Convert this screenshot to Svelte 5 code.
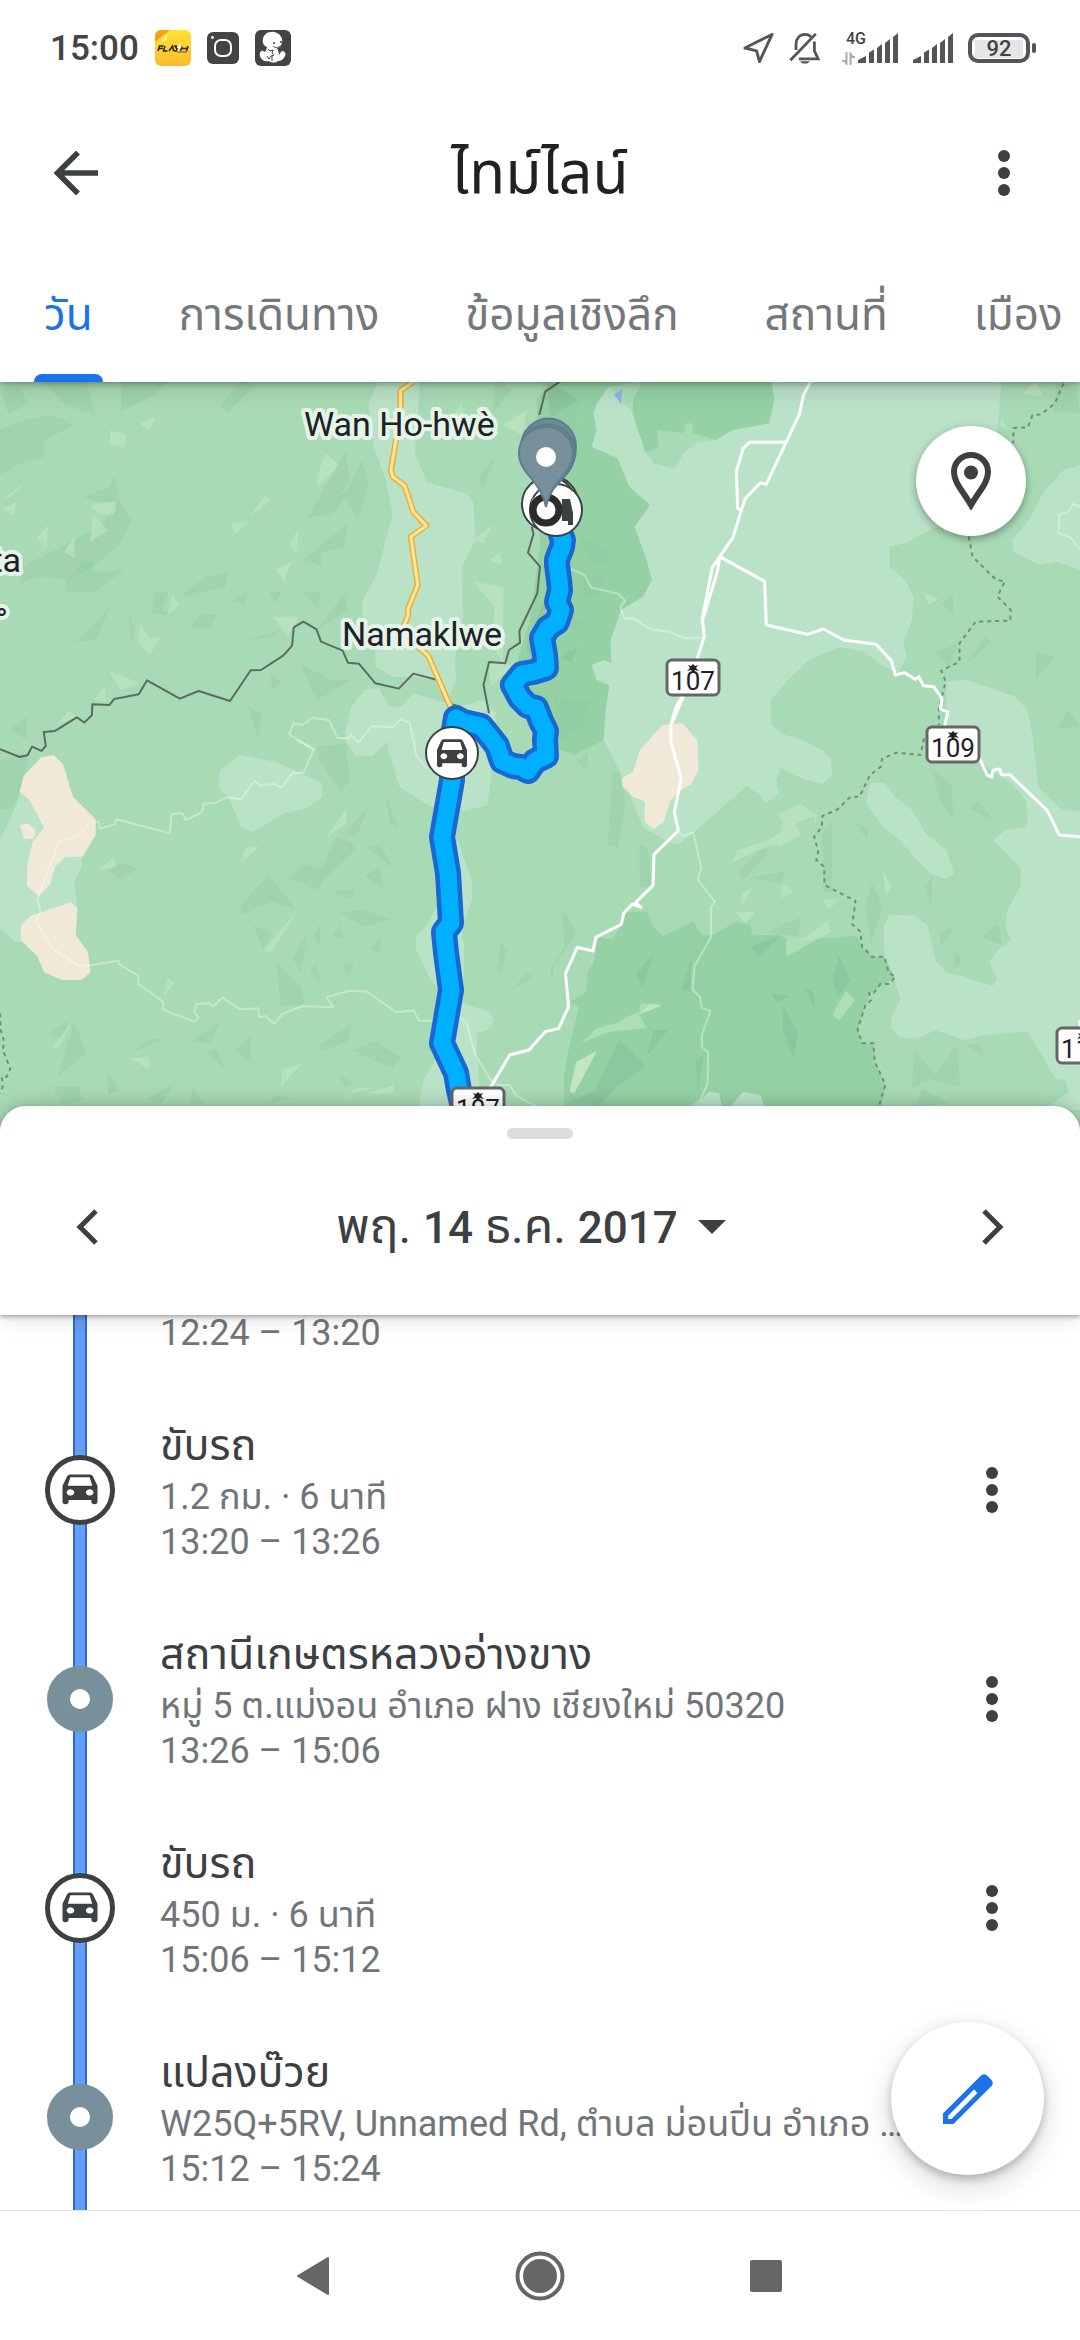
<script>
  import { onMount } from 'svelte';

  let list;
  let activeTab = $state(0);

  const tabs = ['วัน', 'การเดินทาง', 'ข้อมูลเชิงลึก', 'สถานที่', 'เมือง'];

  const visits = [
    { kind: 'place', title: 'ไร่ชา 2000', detail: 'ตำบล ม่อนปิ่น อำเภอ ฝาง เชียงใหม่', time: '12:24 – 13:20' },
    { kind: 'drive', title: 'ขับรถ', detail: '1.2 กม. · 6 นาที', time: '13:20 – 13:26' },
    { kind: 'place', title: 'สถานีเกษตรหลวงอ่างขาง', detail: 'หมู่ 5 ต.แม่งอน อำเภอ ฝาง เชียงใหม่ 50320', time: '13:26 – 15:06' },
    { kind: 'drive', title: 'ขับรถ', detail: '450 ม. · 6 นาที', time: '15:06 – 15:12' },
    { kind: 'place', title: 'แปลงบ๊วย', detail: 'W25Q+5RV, Unnamed Rd, ตำบล ม่อนปิ่น อำเภอ ฝาง เชียงใหม่', time: '15:12 – 15:24' }
  ];

  // Map geometry is stored per tile, in tile units
  const tile = {
    nw: 'translate(0 380) scale(.3444 .3333)',
    ne: 'translate(540 380) scale(.3444 .3333)',
    sw: 'translate(0 740) scale(.3444 .3333)',
    se: 'translate(540 740) scale(.3444 .3333)'
  };

  const LIGHT = '#bae2c7';
  const BASE = '#a8dbb5';
  const FOREST = '#94d2a5';
  const SAND = '#f0e9d8';

  const areas = [
    ['nw', LIGHT, 'M1100 0L1070 70 1075 110 1085 200 1120 300 1140 400 1110 520 1095 580 1050 670 1060 760 1090 800 1090 860 1140 890 1200 890 1260 900 1300 960 1325 900 1320 830 1345 740 1342 560 1380 480 1375 370 1355 340 1240 308 1205 220 1220 0Z'],
    ['nw', LIGHT, 'M1060 928L1020 980 1002 1060 1003 1085 1035 1128 1080 1128 1125 1085 1130 1120 1160 1220 1250 1280 1350 1293 1415 1275 1425 1210 1440 1000 1400 960 1330 980 1200 940 1165 980 1130 980 1100 925Z'],
    ['ne', FOREST, 'M-10 60L40 0 300 0 200 20 155 100 165 150 150 200 225 235 260 320 320 375 275 440 310 540 325 600 300 650 235 690 205 780 208 870 190 1000 185 1080 100 1124 40 1100 -60 1000 -70 860 -30 720 0 500Z'],
    ['ne', LIGHT, 'M165 70L200 20 230 60 265 90 285 160 330 250 390 265 420 215 460 185 510 180 560 150 665 130 680 60 670 0 1340 0 1325 200 1240 400 1150 440 1060 490 1015 500 1015 560 1060 600 1085 650 1080 720 1055 790 1065 830 1040 880 1000 860 940 815 870 800 780 840 720 900 670 960 670 1030 700 1060 760 1080 820 1110 845 1140 848 1185 820 1213 760 1195 700 1165 685 1200 695 1240 655 1270 640 1245 600 1217 450 1355 400 1395 370 1385 300 1342 230 1170 185 1080 190 1000 208 870 205 780 235 690 300 650 325 600 310 540 275 440 320 375 260 320 225 235 150 200 165 150 155 100Z'],
    ['ne', FOREST, 'M270 60L300 0 672 0 680 60 665 130 560 150 510 180 444 160 442 130 422 130 420 160 340 150 345 205 305 215 270 100Z'],
    ['ne', BASE, 'M345 155L425 165 510 182 460 185 420 215 390 265 330 250 305 215 345 210Z'],
    ['ne', LIGHT, 'M1568 255L1520 270 1460 340 1420 420 1370 480 1375 515 1450 555 1500 545 1568 570Z'],
    ['ne', LIGHT, 'M150 855L185 840 210 850 210 920 165 900Z'],
    ['se', LIGHT, 'M1180 -175L1240 -180 1380 -130 1415 -90 1432 0 1447 142 1515 210 1568 212 1568 1110 1460 1110 1535 1055 1525 1020 1495 1015 1455 940 1415 875 1290 885 1230 900 1150 870 1095 895 1045 893 1020 865 1020 830 1047 780 1030 720 1000 650 997 560 1015 525 1085 527 1125 555 1150 665 1180 697 1230 710 1315 738 1327 717 1305 665 1330 630 1367 600 1353 565 1355 515 1397 435 1395 385 1318 300 1350 270 1410 260 1417 235 1410 180 1370 130 1330 105 1270 60 1180 0Z'],
    ['se', LIGHT, 'M960 130L1000 128 1030 170 1080 210 1120 280 1180 330 1202 400 1180 417 1140 405 1080 345 1045 300 1000 265 945 190Z'],
    ['se', FOREST, 'M250 515L310 515 330 560 358 588 445 543 470 585 500 585 570 545 610 555 618 585 695 585 720 600 825 595 920 588 935 620 965 650 1000 650 1030 712 960 760 945 800 922 870 935 910 968 910 972 965 1003 1035 985 1140 70 1140 70 1000 85 920 113 800 88 785 133 755 140 690 155 670 170 590 210 597 240 550Z'],
    ['se', LIGHT, 'M440 1110L490 1055 520 1060 530 1110ZM545 1110L590 1055 640 1065 655 1110Z'],
    ['sw', LIGHT, 'M60 150L50 190 0 300 0 565 45 605 60 605 200 600 225 500 215 425 238 380 235 340Z'],
    ['sw', LIGHT, 'M695 45L800 65 935 130 935 170 890 205 825 220 735 275 700 262 665 175 632 140 640 90Z'],
    ['sw', LIGHT, 'M1330 300L1372 430 1370 480 1340 570 1348 620 1345 790 1390 805 1420 815 1438 843 1415 870 1385 880 1385 950 1400 1130 1210 1130 1230 1020 1270 950 1280 760 1240 700 1205 620 1210 585 1240 555 1280 480Z'],
    ['sw', SAND, 'M155 45L183 72 212 170 278 238 278 285 240 350 190 350 160 380 145 435 112 467 78 437 80 370 95 305 128 262 85 180 57 155 68 108 120 52Z'],
    ['sw', SAND, 'M57 255L80 250 104 272 97 297 70 297Z'],
    ['sw', SAND, 'M205 487L225 505 220 585 255 635 263 697 237 720 180 720 128 697 108 648 60 600 62 555 90 527Z'],
    ['ne', SAND, 'M355 1035L415 1030 458 1085 460 1170 440 1212 400 1237 378 1265 360 1325 330 1347 303 1325 305 1265 270 1250 240 1220 238 1195 270 1175 290 1110Z'],
    ['ne', '#8ab4f0', 'M238 28L215 45 236 72Z']
  ];

  // Relief facets: darker slopes and lit slopes
  const shade = [
    ['nw', 'M0 30L60 20 80 70 25 105ZM120 0L250 0 278 105 190 75ZM355 0L490 0 440 50 350 95ZM0 150L70 120 150 105 215 135 130 180 130 230 60 250 0 285ZM640 80L700 0 735 20 665 95ZM330 285L350 370 382 420 350 490 270 560 200 600 110 590 60 610 60 560 160 510 300 430 330 380 240 350 320 320ZM900 400L1005 210 1015 310 960 370ZM1050 240L1070 310 1040 420 1000 350ZM885 415L1020 320 970 400ZM880 540L1010 430 1000 500 930 520 935 560ZM530 640L600 590 665 575 655 620 545 650ZM450 635L490 635 470 690 510 705 440 700ZM665 665L725 630 710 670ZM780 640L820 630 800 670ZM880 635L930 635 925 690ZM1000 640L1010 690 920 750ZM550 745L585 700 630 705 610 745ZM320 680L280 780 220 785ZM820 750L790 770 715 780ZM375 705L390 750 380 795ZM785 880L820 905 790 930ZM870 850L960 900 1020 900 920 960ZM720 980L760 1000 750 1080ZM30 1045L80 1010 75 1080ZM1440 0L1485 30 1430 100ZM1440 230L1400 330 1390 290Z'],
    ['nw', 'M195 600L245 540 270 545 270 575 360 570 280 635 190 635Z'],
    ['ne', 'M0 0L110 60 100 200 40 130ZM110 470L190 500 200 540 150 560ZM120 590L190 590 170 640 130 660ZM60 700L130 720 100 760ZM40 950L150 960 120 1040 60 1080ZM1200 645L1200 705 1165 670ZM1290 770L1310 785 1240 850ZM1440 815L1495 830 1440 900ZM1535 990L1568 1040 1500 1045ZM1150 820L1210 790 1190 860ZM1500 0L1560 30 1568 100 1490 100Z'],
    ['sw', 'M0 60L70 40 80 70 50 180 30 205 0 210ZM920 20L1005 10 1015 120 990 155 925 60ZM1070 200L1035 290 1000 280ZM1120 165L1155 260 1130 250ZM1065 320L1105 315 1140 385ZM345 370L402 385 350 418 315 395ZM840 415L885 372 935 385 975 290 1025 310 1030 330 940 420 920 450ZM780 405L860 508 790 485 700 525 700 495ZM960 458L1030 447 1025 478ZM1060 410L1100 382 1115 448ZM985 520L1050 508 1138 537 1060 560ZM735 555L788 580 765 630ZM910 590L930 550 928 620ZM965 590L988 555 998 600ZM850 655L890 585 875 700ZM900 695L915 670 930 728ZM995 675L1028 662 1010 717ZM1075 630L1105 585 1105 640ZM803 670L875 740 883 790 815 802ZM140 880L200 840 180 900ZM215 845L250 940 168 1010ZM380 940L430 900 480 895ZM550 905L640 845 610 910ZM600 935L630 930 655 990ZM685 930L728 885 728 970ZM925 915L1018 855 1010 905 930 935ZM1020 930L1090 905 1165 950 1140 985ZM155 1040L230 1040 240 1080 180 1095ZM310 990L345 1050 315 1065ZM430 1075L505 1030 470 1090ZM560 1040L590 1090 550 1090ZM800 1065L860 1075 780 1090ZM1455 605L1470 630 1455 710 1443 680ZM1490 748L1530 695 1547 710ZM985 1000L1030 1035 1000 1040Z'],
    ['se', 'M105 65L138 35 138 90ZM210 90L230 95 248 200 225 325 197 315ZM288 310L312 325 328 440 290 440ZM65 505L105 580 40 680 35 730 30 690 70 620ZM655 310L660 345 590 420 575 400ZM610 415L712 392 700 430ZM820 280L848 245 848 455 823 455ZM910 243L957 270 950 300ZM1140 88L1195 135 1200 240 1160 180ZM1270 182L1323 247 1247 207ZM963 425L995 500 960 615 945 500ZM1120 440L1140 405 1135 510ZM758 530L750 588 650 580ZM1160 580L1207 558 1165 618ZM1280 590L1330 552 1343 615ZM1205 630L1225 665 1203 690ZM1088 930L1152 1010 1080 1045ZM1210 915L1220 1040 1135 1020ZM1237 915L1282 912 1287 950ZM1110 1045L1185 1090 1090 1100Z']
  ];

  const lit = [
    ['nw', 'M405 130L455 112 432 152ZM320 150L368 165 362 203 318 195ZM5 360L85 298 30 350ZM5 385L47 368 40 405ZM262 375L335 362 335 400ZM258 378L325 378 330 405 290 400ZM270 405L315 450 262 485ZM108 475L140 435 135 505ZM185 515L215 470 218 535ZM945 220L985 255 925 322 920 290ZM725 410L770 345 788 362ZM670 430L730 422 683 462ZM840 490L865 450 863 525ZM800 570L845 545 825 605ZM500 645L520 675 485 710ZM792 710L868 710 835 768ZM407 732L435 775 468 770 435 825 400 785ZM315 870L405 910 350 930ZM270 960L305 920 308 965ZM165 1035L200 990 220 1010ZM1370 480L1430 435 1405 490ZM1420 540L1455 515 1455 555ZM1375 605L1462 620 1460 850 1430 800 1435 680ZM1460 135L1530 90 1515 165ZM1300 130L1340 70 1355 120ZM1425 920L1420 850 1490 855Z'],
    ['ne', 'M1405 40L1440 0 1460 50ZM1340 110L1360 155 1335 135ZM1115 640L1158 655 1128 675Z'],
    ['sw', 'M945 295L1008 203 1005 250ZM700 368L715 322 755 320ZM285 390L330 352 338 380ZM765 632L865 510 785 640ZM475 768L487 713 508 730ZM152 920L205 850 170 925ZM380 955L433 950 435 990ZM815 1040L820 990 877 970ZM1065 1060L1145 1035 1142 1060ZM985 1090L1030 1045 1100 1042 1020 1060Z'],
    ['se', 'M690 225L755 190 805 225 800 255 795 228 740 250 757 285 695 320 660 303 700 275 705 245ZM560 368L570 332 680 295 700 305 600 345ZM583 505L588 455 618 443ZM705 430L738 455 700 475ZM820 477L865 480 840 510ZM565 515L625 515 598 550ZM715 600L770 595 835 543 845 575 715 650ZM995 390L1020 440 1005 470ZM848 825L888 753 915 778 870 842ZM118 910L165 865 220 850 283 815 310 865 200 875ZM285 825L293 790 352 793Z'],
  ];

  const forestShade = [
    ['se', 'M280 700L332 638 297 745ZM440 655L437 755 410 750ZM848 715L868 648 903 720 865 770ZM672 760L726 768 685 788ZM768 745L795 755 797 807ZM708 800L750 880 735 958 702 860ZM615 618L700 585 630 655ZM330 870L372 870 310 950ZM230 900L310 980 220 1040 175 1095 90 1085 160 1050ZM450 965L475 940 460 1050Z'],
    ['ne', 'M-40 800L20 640 0 900ZM60 830L110 800 90 850ZM20 0L110 60 30 110Z']
  ];

  // Minor tracks
  const tracks = [
    ['nw', 'M910 1110L840 1062 852 1030 878 1035 905 1014 955 1020 980 1074 1015 1074 1018 1062 1040 1088 1080 1038 1142 1042 1163 1018 1190 1028 1210 1130 1240 1165'],
    ['sw', 'M860 0L912 26 882 98 850 98 817 143 798 131 755 137 740 122 700 178 660 172 618 191 612 188 592 192 585 218 540 240 530 220 498 222 493 280 338 238 333 253 290 266 288 247 265 247 222 290 170 305 108 480 118 515 103 542 152 625 232 680 345 662 345 672 402 708 402 732 473 785 475 810 565 845 577 832 563 815 570 793 610 790 617 800 646 773 698 808 750 805 752 830 770 828 797 852 820 822 880 798 968 802 948 772 1015 752 1065 755 1152 817 1200 811 1217 842 1265 842'],
    ['sw', 'M1330 825L1355 852 1380 945 1425 1020 1445 1035 1480 1035 1500 1068 1568 1105'],
    ['ne', 'M85 565L130 585 148 622 228 642 248 662 233 683 246 716 273 715 320 748 380 757 420 775 475 772'],
    ['ne', 'M1568 380L1548 372 1532 398 1508 402 1505 460 1537 470 1568 507'],
    ['se', 'M402 275L415 288 445 278 468 385 458 420 508 485 497 500 497 590 448 680 443 750 465 772 470 805 495 812 470 885 470 922 488 937 487 1030 465 1080 440 1100']
  ];

  const roads = [
    ['ne', 'M788 0L765 45 753 103 657 313 640 308 595 357 560 473 522 530 515 575 472 722 477 770 452 850M717 187L608 187 590 205 570 275 574 385 585 392M522 530L500 563 470 722M522 530L652 604 657 735 776 763 823 747 882 780 976 793 1020 842 1032 885 1058 878 1090 898 1100 890 1113 917 1143 920 1167 955 1163 988 1184 996 1172 1050M415 945L395 980 380 1035 380 1085 410 1195 390 1297 402 1352'],
    ['ne', 'M418 945L383 1030'],
    ['se', 'M1270 40L1298 105 1312 111 1315 91 1335 87 1340 104 1365 104 1473 212 1508 285 1568 290M402 272L331 343 328 436 278 487 293 502 268 492 243 520 236 553 162 592 154 633 108 622 74 702 83 800 54 866 15 875 -32 930 -88 945 -145 1045M1568 840L1568 890']
  ];

  const border = [
    ['nw', 'M0 1108L57 1131 80 1126 93 1100 120 1113 133 1098 127 1056 160 1053 223 1012 245 1028 267 1005 268 973 318 975 332 957 403 943 427 901 522 956 577 933 668 963 728 871 758 870 823 826 848 797 853 742 881 725 919 748 932 785 995 812 1010 848 1042 851 1090 910 1158 926 1200 881 1273 901 1297 968 1340 982'],
    ['nw', 'M1420 1000L1404 915 1420 846 1467 850 1478 810 1510 788 1508 753 1560 640 1568 560 1533 518 1549 462 1544 440M1566 105L1583 35 1626 5']
  ];

  const district = [
    ['ne', 'M1520 10L1495 70 1455 103 1430 105 1417 142 1375 144 1374 190M1245 470L1256 530 1325 600 1350 604 1328 650 1367 690 1365 722 1265 725 1218 790 1218 845 1165 872 1178 905 1158 985 1158 1035M1115 1075L1105 1125 1035 1118 993 1137 990 1160 958 1185 928 1250 902 1250 862 1290 820 1308 818 1342 796 1370 808 1415 802 1440 825 1460 826 1515 916 1563 907 1633 930 1655 935 1700 965 1731 1000 1730 1012 1778 1032 1790 1015 1812 988 1812 970 1838 955 1838 962 1860 945 1876 922 1947 935 1990 968 1990 972 2045 1003 2115 985 2175'],
    ['sw', 'M0 820L2 870 12 905 8 930 30 985 20 1010 5 1010 8 1040 0 1060']
  ];

  const yellowRoad = 'M1200 5L1163 32 1163 100 1135 270 1140 290 1175 317 1200 395 1238 437 1193 470 1213 615 1185 685 1185 707 1170 745 1175 765 1243 827 1310 985';

  const route = 'M560 532L563 540 562 547 557 560 557 565 559 580 560 590 557 602 561 610 557 622 548 628 542 638 545 655 546 668 533 672 522 674 513 685 520 698 528 706 536 708 541 721 546 731 545 740 546 756 535 761 528 771 521 767 513 766 502 761 497 746 490 737 481 726 463 722 456 718 453 735 452 753 452 780 442 837 448 873 451 923 444 932 446 953 451 990 442 1043 456 1073 459 1090 466 1120';

  const shields = [
    { x: 667, y: 660, no: '107' },
    { x: 927, y: 727, no: '109' },
    { x: 452, y: 1088, no: '107' },
    { x: 1057, y: 1028, no: '118' }
  ];

  onMount(() => {
    // Leave only the end of the first visit in view
    list.scrollTop = 139;
  });
</script>

{#snippet car()}
  <path fill="#3c4043" fill-rule="evenodd" d="M6 1h12l1.200 1 2.800 7v11.500c0 .8-.6 1.500-1.500 1.500h-.5c-.8 0-1.500-.7-1.500-1.500V19h-13v1.500c0 .8-.7 1.500-1.500 1.500h-.5C2.600 22 2 21.300 2 20.500V9l2.800-7zM6.500 3L5 9h14l-1.500-6zM6.500 11.500a2.200 2.200 0 1 0 .1 0zM17.500 11.500a2.200 2.200 0 1 0 .1 0z" />
{/snippet}

{#snippet more()}
  <svg class="more-icon" viewBox="0 0 12 46" aria-hidden="true">
    <circle cx="6" cy="6" r="6" />
    <circle cx="6" cy="23" r="6" />
    <circle cx="6" cy="40" r="6" />
  </svg>
{/snippet}

{#snippet signal()}
  <svg class="signal" viewBox="0 0 41 30" aria-hidden="true">
    <path fill="#555" d="M0 30v-3l8-4v7zM11 30V19.500l5-3V30zM19 30V15l5-4v19zM27 30V10l5-4v24zM35 30V4l5-4v30z" />
  </svg>
{/snippet}

<div class="app">
  <header>
    <div class="status">
      <span class="clock">15:00</span>
      <svg class="notif" viewBox="0 0 36 36" aria-hidden="true">
        <defs>
          <linearGradient id="flash" x1="0" y1="0" x2="0" y2="1">
            <stop offset="0" stop-color="#ffe32e" />
            <stop offset="1" stop-color="#fdbb30" />
          </linearGradient>
        </defs>
        <rect width="36" height="36" rx="6" fill="url(#flash)" />
        <path d="M0 12V6a6 6 0 0 1 6-6h9z" fill="#f9a11b" />
        <path d="M4 12c4-1 5-5 8-8l0 6z" fill="#fff3c0" />
        <path d="M3 21l1.500-5h4M4 18.500h4M10 16l-1.500 5h4M14 21l3.500-5 1 5M22 16h-2l2 3-1 2h-2M27 16l-1.500 5M33 16l-1.500 5M26 18.500h6" fill="none" stroke="#2a2415" stroke-width="1.500" />
        <path d="M26 12l-4 6h2l-2 6 5-8h-2z" fill="#fff" />
        <path d="M22 22h10" stroke="#6b5413" />
      </svg>
      <svg class="notif" viewBox="0 0 36 36" aria-hidden="true">
        <rect x="2" y="2" width="32" height="32" rx="6" fill="#444" />
        <rect x="10" y="10" width="16" height="16" rx="6" fill="none" stroke="#fff" stroke-width="2" />
        <circle cx="7.500" cy="7.500" r="1.400" fill="#fff" />
      </svg>
      <svg class="notif" viewBox="0 0 36 36" aria-hidden="true">
        <rect width="36" height="36" rx="6" fill="#444" />
        <path fill="#fff" d="M8 9c1-6 8-9 14-6 4 2 6 6 5 10-1 3-3 5-5 5 1 2 2 5 2 7 1-1 2-4 3-4 3 0 4 3 3 5-1 3-4 5-7 5-2 2-7 2-9 0-4 1-8-1-9-5-1-3 1-6 3-5l2 1c1-2 2-4 2-5-3-1-5-4-4-8z" />
        <path d="M13 19l2 2 3-1-1 3 2 2-3 1-2 3-2-3M17 31v-5" fill="none" stroke="#444" />
        <circle cx="19" cy="13" r="1" fill="#444" />
        <circle cx="26" cy="12" r="1" fill="#444" />
        <path d="M18 16c2 2 5 2 7 0" fill="none" stroke="#444" />
      </svg>
      <span class="spacer"></span>
      <svg class="status-icon" viewBox="0 0 32 32" aria-hidden="true">
        <path d="M30 2L2 16l12 3 3 11z" fill="none" stroke="#555" stroke-width="3" stroke-linejoin="round" />
      </svg>
      <svg class="status-icon bell" viewBox="0 0 32 34" aria-hidden="true">
        <path d="M7 19v-6c0-6 4-10.500 9.500-10.500 3 0 5 1 6.500 3M26.500 10v10l4 8.500H10" fill="none" stroke="#555" stroke-width="3" />
        <path d="M1 30L28 2" stroke="#555" stroke-width="3" />
        <path d="M11 31h11l-3 2.500h-5z" fill="#555" />
      </svg>
      <span class="network">
        <span>4G</span>
        <svg viewBox="0 0 13 13" aria-hidden="true">
          <path d="M0 9h2.500l2 2.500V0M13 5h-2.500l-2-3V13" fill="none" stroke="#aaa" stroke-width="2" />
        </svg>
      </span>
      {@render signal()}
      {@render signal()}
      <span class="battery"><span>92</span></span>
    </div>

    <div class="bar">
      <button aria-label="ย้อนกลับ">
        <svg class="back" viewBox="0 0 44 44" aria-hidden="true">
          <path d="M44 22H4M24 1.500L3.500 22 24 42.500" fill="none" stroke="#3c4043" stroke-width="5.500" />
        </svg>
      </button>
      <h1>ไทม์ไลน์</h1>
      <button class="end" aria-label="ตัวเลือกเพิ่มเติม">{@render more()}</button>
    </div>

    <nav class="tabs">
      {#each tabs as tab, i}
        <button class:active={i === activeTab} onclick={() => (activeTab = i)}>{tab}</button>
      {/each}
    </nav>
  </header>

  <section class="map">
    <svg class="canvas" viewBox="0 382 1080 750" preserveAspectRatio="xMidYMin slice" role="img" aria-label="แผนที่">
      <rect x="0" y="382" width="1080" height="750" fill={BASE} />
      {#each areas as [t, fill, d]}
        <path transform={tile[t]} {fill} {d} />
      {/each}
      {#each shade as [t, d]}
        <path transform={tile[t]} class="shade" {d} />
      {/each}
      {#each lit as [t, d]}
        <path transform={tile[t]} class="lit" {d} />
      {/each}
      {#each forestShade as [t, d]}
        <path transform={tile[t]} class="forest-shade" {d} />
      {/each}
      <path transform={tile.se} fill="#c3e5c1" d="M85 1055L105 965 165 933 100 1060ZM285 825L320 793 352 797Z" />
      {#each tracks as [t, d]}
        <path transform={tile[t]} class="track" {d} />
      {/each}
      {#each district as [t, d]}
        <path transform={tile[t]} class="district" {d} />
      {/each}
      {#each border as [t, d]}
        <path transform={tile[t]} class="border" {d} />
      {/each}
      {#each roads as [t, d]}
        <path transform={tile[t]} class="road" {d} />
      {/each}
      <path transform={tile.nw} class="yellow-case" d={yellowRoad} />
      <path transform={tile.nw} class="yellow" d={yellowRoad} />

      <path class="route-case" d={route} />
      <path class="route" d={route} />

      <g class="label">
        <text x="304" y="436">Wan Ho-hwè</text>
        <text x="342" y="646">Namaklwe</text>
        <text x="21" y="572" text-anchor="end">ta</text>
        <text x="8" y="632" text-anchor="end">ஃ°</text>
      </g>

      {#each shields as s}
        <g class="shield">
          <rect x={s.x} y={s.y} width="52" height="35" rx="5" />
          <text x={s.x + 26} y={s.y + 30} text-anchor="middle">{s.no}</text>
          <path d="M{s.x + 26} {s.y + 4}l2 2 3-1-2 3 3 3-4-1-2 3-2-3-4 1 3-3-2-3 3 1z" />
        </g>
      {/each}

      <g transform="translate(452 753)">
        <circle r="26" fill="#fff" stroke="#3c4043" stroke-width="2" />
        <svg x="-18" y="-15" width="36" height="32" viewBox="0 0 24 24" preserveAspectRatio="none">{@render car()}</svg>
      </g>

      <circle cx="551" cy="503" r="27" class="stop" />
      <circle cx="549" cy="504" r="27" class="stop" />
      <circle cx="556" cy="510" r="26" class="stop" />
      <path d="M562 499h8l3 14v12h-5v-4h-6z" fill="#3c4043" />
      <path d="M536 516a18 18 0 0 1-2-18" fill="none" stroke="#999" stroke-width="3" />
      <circle cx="546" cy="510" r="13" fill="#fff" stroke="#2b2b2b" stroke-width="7" />
      <path class="pin-back" d="M548 499c-3-13-9-18-16-26-7-7-11-15-11-26a27 28 0 0 1 55 0c0 11-3 19-10 26-7 8-15 13-18 26z" />
      <path class="pin-back" d="M547 503c-3-13-9-18-16-26-7-7-11-14-11-25a27 27 0 0 1 55 0c0 11-4 18-11 25-7 8-14 13-17 26z" />
      <path class="pin" d="M546 507c-2-12-8-20-15-29-7-8-12-15-12-25a27 26 0 0 1 54 0c0 10-5 17-12 25-7 9-13 17-15 29z" />
      <circle cx="546" cy="457" r="10" fill="#fff" />
    </svg>
    <button class="places" aria-label="สถานที่บนแผนที่">
      <svg viewBox="0 0 40 58" aria-hidden="true">
        <path d="M20 3C10.500 3 3 10.500 3 20c0 11 9 19 17 33 8-14 17-22 17-33C37 10.500 29.500 3 20 3z" fill="none" stroke="#3c4043" stroke-width="6" />
        <circle cx="20" cy="20.500" r="7" fill="#3c4043" />
      </svg>
    </button>
  </section>

  <main>
    <div class="day">
      <span class="handle"></span>
      <div class="picker">
        <button aria-label="วันก่อนหน้า">
          <svg class="chevron" viewBox="0 0 22 36" aria-hidden="true"><path d="M20 2L4 18l16 16" /></svg>
        </button>
        <button class="date">
          <span>พฤ. <b>14</b> ธ.ค. <b>2017</b></span>
          <svg viewBox="0 0 28 14" aria-hidden="true"><path d="M0 0h28L14 14z" fill="#3c4043" /></svg>
        </button>
        <button class="end" aria-label="วันถัดไป">
          <svg class="chevron" viewBox="0 0 22 36" aria-hidden="true"><path d="M2 2l16 16L2 34" /></svg>
        </button>
      </div>
    </div>

    <ol bind:this={list}>
      {#each visits as v}
        <li>
          <span class="rail">
            {#if v.kind === 'drive'}
              <span class="dot drive">
                <svg viewBox="0 0 24 24" preserveAspectRatio="none" aria-hidden="true">{@render car()}</svg>
              </span>
            {:else}
              <span class="dot place"></span>
            {/if}
          </span>
          <div class="info">
            <h2>{v.title}</h2>
            <p>{v.detail}</p>
            <p>{v.time}</p>
          </div>
          <button class="end" aria-label="ตัวเลือก">{@render more()}</button>
        </li>
      {/each}
    </ol>

    <button class="fab" aria-label="แก้ไข">
      <svg viewBox="0 0 50 50" aria-hidden="true">
        <path fill="#1a73e8" fill-rule="evenodd" d="M0 39.500L37 2.500c3-3 5.500-3 8 0l2.500 2.500c3 3 3 5.500 0 8L10.500 50H0zM5 42v3h3.500L34.500 19 31 15.500z" />
      </svg>
    </button>
  </main>

  <nav class="system">
    <button aria-label="กลับ">
      <svg viewBox="0 0 50 50" aria-hidden="true"><path d="M9 25L39 7v36z" fill="#666" stroke="#666" stroke-width="2" stroke-linejoin="round" /></svg>
    </button>
    <button aria-label="หน้าแรก">
      <svg viewBox="0 0 50 50" aria-hidden="true">
        <circle cx="25" cy="25" r="22.500" fill="none" stroke="#666" stroke-width="4" />
        <circle cx="25" cy="25" r="17" fill="#666" />
      </svg>
    </button>
    <button aria-label="แอปล่าสุด">
      <svg viewBox="0 0 50 50" aria-hidden="true"><rect x="9" y="9" width="32" height="32" rx="2" fill="#666" /></svg>
    </button>
  </nav>
</div>

<style>
  :global(body) {
    background: #fff;
  }

  .app {
    display: flex;
    flex-direction: column;
    height: 100vh;
    font-family: Roboto, 'Noto Sans Thai', 'Noto Sans', sans-serif;
    color: #3c4043;
    background: #fff;
  }

  button {
    padding: 0;
    border: 0;
    background: none;
    font: inherit;
    color: inherit;
    cursor: pointer;
  }

  svg {
    display: block;
  }

  header {
    position: relative;
    z-index: 2;
    background: #fff;
    box-shadow: 0 2px 6px rgba(0, 0, 0, 0.3), 0 6px 24px rgba(0, 0, 0, 0.14);
  }

  .status {
    display: flex;
    align-items: center;
    height: 96px;
    padding: 0 44px 0 50px;
    color: #444;
  }

  .clock {
    font-size: 35px;
    font-weight: 500;
    margin-right: 2px;
  }

  .notif {
    width: 36px;
    height: 36px;
    margin-left: 14px;
  }

  .spacer {
    flex: 1;
  }

  .status-icon {
    width: 31px;
    height: 32px;
    margin-right: 15px;
  }

  .bell {
    margin-right: 22px;
  }

  .network {
    display: flex;
    flex-direction: column;
    align-self: center;
    width: 16px;
    height: 34px;
    font-size: 16px;
    line-height: 16px;
    font-weight: 500;
    gap: 5px;
  }

  .network span {
    padding-left: 4px;
  }

  .network svg {
    width: 13px;
    height: 13px;
  }

  .signal {
    width: 41px;
    height: 30px;
    margin-right: 14px;
  }

  .battery {
    position: relative;
    box-sizing: border-box;
    width: 62px;
    height: 30px;
    padding: 3px;
    margin-right: 6px;
    border: 4px solid #555;
    border-radius: 10px;
    font-size: 22px;
    line-height: 18px;
    font-weight: 500;
    text-align: center;
  }

  .battery span {
    display: block;
    background: #e6e6e6;
  }

  .battery::after {
    content: '';
    position: absolute;
    right: -10px;
    top: 6px;
    width: 4px;
    height: 10px;
    border-radius: 2px;
    background: #555;
  }

  .bar,
  .picker {
    display: grid;
    grid-template-columns: 120px 1fr 120px;
    align-items: center;
  }

  .bar {
    height: 154px;
    padding: 0 54px;
  }

  h1 {
    margin: 0;
    font-size: 59px;
    line-height: 80px;
    font-weight: 400;
    text-align: center;
    color: #202124;
  }

  .end {
    justify-self: end;
  }

  .back {
    width: 44px;
    height: 44px;
  }

  .more-icon {
    width: 12px;
    height: 46px;
    fill: #3c4043;
  }

  .bar .end {
    margin-right: 16px;
  }

  .tabs {
    display: flex;
    gap: 66px;
    height: 132px;
    padding-left: 34px;
    overflow: hidden;
  }

  .tabs button {
    position: relative;
    flex: none;
    padding: 0 10px;
    font-size: 44px;
    color: #74787c;
  }

  .tabs .active {
    color: #1a73e8;
  }

  .tabs .active::after {
    content: '';
    position: absolute;
    left: 0;
    right: 0;
    bottom: 0;
    height: 8px;
    border-radius: 8px 8px 0 0;
    background: #1a73e8;
  }

  .map {
    position: relative;
    flex: none;
    aspect-ratio: 1080 / 750;
  }

  .canvas {
    width: 100%;
    height: 100%;
  }

  .shade { fill: #8fc9a0; opacity: 0.35; }
  .lit { fill: #c8eac8; opacity: 0.5; }
  .forest-shade { fill: #7fb78f; opacity: 0.35; }

  .track,
  .road,
  .border,
  .district,
  .yellow,
  .yellow-case {
    fill: none;
    vector-effect: non-scaling-stroke;
    stroke-linejoin: round;
  }

  .track { stroke: #fff; stroke-opacity: 0.35; stroke-width: 2px; }
  .road { stroke: #fff; stroke-width: 3px; }
  .border { stroke: #5c6b62; stroke-width: 2px; }
  .district { stroke: #6f9079; stroke-width: 2px; stroke-dasharray: 4 4; }
  .yellow-case { stroke: #e5b13c; stroke-width: 6px; }
  .yellow { stroke: #ffe69a; stroke-width: 3px; }

  .route,
  .route-case {
    fill: none;
    stroke-linejoin: round;
  }

  .route-case { stroke: #1967d2; stroke-width: 26px; }
  .route { stroke: #00b0ff; stroke-width: 17px; }

  .label text {
    font-size: 34px;
    fill: #202124;
    stroke: #e4f4e8;
    stroke-width: 8px;
    stroke-linejoin: round;
    paint-order: stroke;
  }

  .shield rect { fill: #fff; stroke: #666; stroke-width: 3px; }
  .shield text { font-size: 26px; fill: #202124; }
  .shield path { fill: #202124; }

  .stop { fill: #fff; stroke: #3c4043; stroke-width: 2px; }
  .pin-back { fill: #6f8996; stroke: #5d7c8a; stroke-width: 2px; }
  .pin { fill: #78909c; stroke: #5f7d8b; stroke-width: 2px; }

  .places {
    position: absolute;
    top: 44px;
    right: 54px;
    display: grid;
    place-items: center;
    width: 110px;
    height: 110px;
    border-radius: 50%;
    background: #fff;
    box-shadow: 0 3px 8px rgba(0, 0, 0, 0.35);
  }

  .places svg {
    width: 40px;
    height: 58px;
  }

  main {
    position: relative;
    z-index: 1;
    flex: 1;
    min-height: 0;
    display: flex;
    flex-direction: column;
    margin-top: -26px;
    border-radius: 26px 26px 0 0;
    background: #fff;
    box-shadow: 0 -2px 20px rgba(0, 0, 0, 0.16);
  }

  .day {
    position: relative;
    z-index: 1;
    flex: none;
    padding-top: 22px;
    border-radius: 26px 26px 0 0;
    background: #fff;
    box-shadow: 0 2px 4px rgba(0, 0, 0, 0.3), 0 6px 20px rgba(0, 0, 0, 0.1);
  }

  .handle {
    display: block;
    width: 66px;
    height: 11px;
    margin: 0 auto;
    border-radius: 6px;
    background: #dadce0;
  }

  .picker {
    height: 176px;
    padding: 0 76px;
  }

  .picker > button {
    justify-self: start;
  }

  .picker > .end {
    justify-self: end;
  }

  .picker > .date {
    display: flex;
    align-items: center;
    justify-self: center;
    gap: 20px;
    margin-right: 18px;
    font-size: 48px;
    line-height: 60px;
  }

  .date b {
    font-size: 44px;
    font-weight: 500;
  }

  .date svg {
    width: 28px;
    height: 14px;
  }

  .chevron {
    width: 22px;
    height: 36px;
    fill: none;
    stroke: #3c4043;
    stroke-width: 5px;
  }

  ol {
    flex: 1;
    min-height: 0;
    margin: 0;
    padding: 0;
    list-style: none;
    overflow-y: auto;
    scrollbar-width: none;
  }

  li {
    display: grid;
    grid-template-columns: 160px 1fr 60px;
    align-items: center;
    height: 209px;
    padding-right: 82px;
  }

  .rail {
    position: relative;
    display: grid;
    place-items: center;
    align-self: stretch;
  }

  .rail::before {
    content: '';
    position: absolute;
    top: 0;
    bottom: 0;
    left: 73px;
    box-sizing: border-box;
    width: 14px;
    border: solid #2f6bc6;
    border-width: 0 2px;
    background: #669df6;
  }

  .dot {
    position: relative;
    box-sizing: border-box;
    border-radius: 50%;
    background: #fff;
  }

  .drive {
    display: grid;
    place-items: center;
    width: 70px;
    height: 70px;
    border: 5px solid #3c4043;
  }

  .drive svg {
    width: 42px;
    height: 34px;
  }

  .place {
    width: 66px;
    height: 66px;
    border: 23px solid #78909c;
  }

  .info {
    min-width: 0;
    padding-right: 20px;
  }

  h2,
  p {
    margin: 0;
    overflow: hidden;
    white-space: nowrap;
    text-overflow: ellipsis;
    font-weight: 400;
  }

  h2 {
    font-size: 43px;
    line-height: 60px;
  }

  p {
    font-size: 36px;
    line-height: 45px;
    color: #70757a;
  }

  .fab {
    position: absolute;
    z-index: 2;
    right: 36px;
    bottom: 35px;
    display: grid;
    place-items: center;
    width: 153px;
    height: 153px;
    border-radius: 50%;
    background: #fff;
    box-shadow: 0 4px 8px rgba(0, 0, 0, 0.22), 0 10px 30px rgba(0, 0, 0, 0.16);
  }

  .fab svg {
    width: 50px;
    height: 50px;
  }

  .system {
    position: relative;
    z-index: 2;
    flex: none;
    display: flex;
    justify-content: center;
    align-items: center;
    gap: 176px;
    height: 129px;
    border-top: 1px solid #e2e2e2;
    background: #fff;
  }

  .system svg {
    width: 50px;
    height: 50px;
  }
</style>
